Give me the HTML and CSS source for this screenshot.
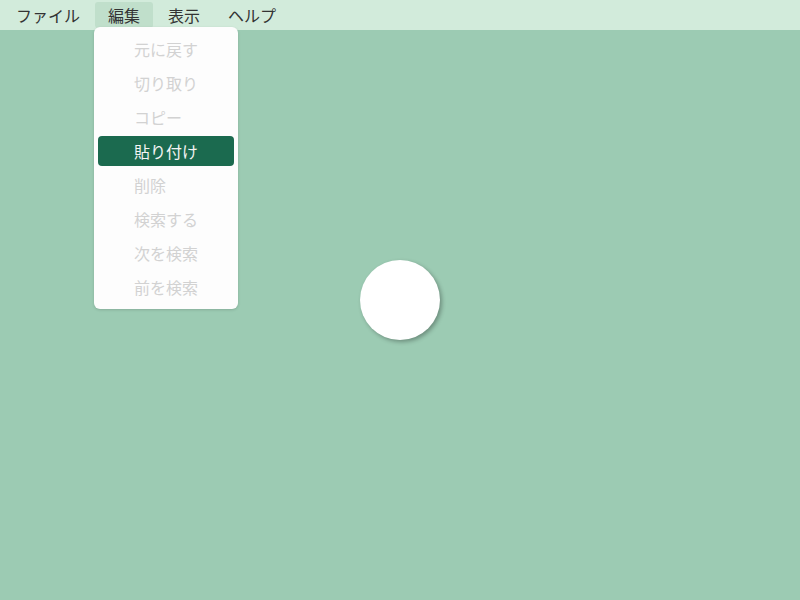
FILE: index.html
```html
<!DOCTYPE html>
<html lang="ja">
<head>
<meta charset="utf-8">
<link rel="stylesheet" href="styles.css">
</head>
<body>
<div class="app">
  <nav class="menubar">
    <div class="menu-title">ファイル</div>
    <div class="menu-title active">編集
      <ul class="dropdown">
        <li class="item disabled">元に戻す</li>
        <li class="item disabled">切り取り</li>
        <li class="item disabled">コピー</li>
        <li class="item selected">貼り付け</li>
        <li class="item disabled">削除</li>
        <li class="item disabled">検索する</li>
        <li class="item disabled">次を検索</li>
        <li class="item disabled">前を検索</li>
      </ul>
    </div>
    <div class="menu-title">表示</div>
    <div class="menu-title">ヘルプ</div>
  </nav>
  <main class="canvas">
    <div class="circle"></div>
  </main>
</div>
</body>
</html>
```

FILE: styles.css
```css
html, body {
  margin: 0;
  padding: 0;
  width: 800px;
  height: 600px;
  overflow: hidden;
  font-family: "Noto Sans CJK JP", "Noto Sans", sans-serif;
}
.app {
  display: flex;
  flex-direction: column;
  height: 600px;
  background: #9ccbb3;
}
.menubar {
  display: flex;
  gap: 2px;
  height: 30px;
  box-sizing: border-box;
  padding: 2px 3px;
  background: #d2ebdb;
  position: relative;
  z-index: 2;
}
.menu-title {
  position: relative;
  padding: 0 13px;
  height: 26px;
  line-height: 26px;
  font-size: 16px;
  color: #333;
  border-radius: 3px;
}
.menu-title.active {
  background: #c0dfcb;
}
.dropdown {
  position: absolute;
  left: -1px;
  top: 25px;
  width: 144px;
  box-sizing: border-box;
  margin: 0;
  padding: 7px 4px 7px;
  list-style: none;
  background: #fdfdfd;
  border-radius: 6px;
  box-shadow: 0 1px 3px rgba(0,0,0,0.15);
  display: flex;
  flex-direction: column;
  gap: 4px;
}
.item {
  height: 30px;
  line-height: 30px;
  padding-left: 36px;
  font-size: 16px;
  border-radius: 4px;
}
.item.disabled {
  color: #d2d2d2;
}
.item.selected {
  background: #1b6a4f;
  color: #f4f4f4;
}
.canvas {
  flex: 1;
  display: flex;
  align-items: center;
  justify-content: center;
  padding-bottom: 30px;
}
.circle {
  width: 80px;
  height: 80px;
  border-radius: 50%;
  background: #fff;
  box-shadow: 2px 2px 4px rgba(0,0,0,0.3);
}
```
